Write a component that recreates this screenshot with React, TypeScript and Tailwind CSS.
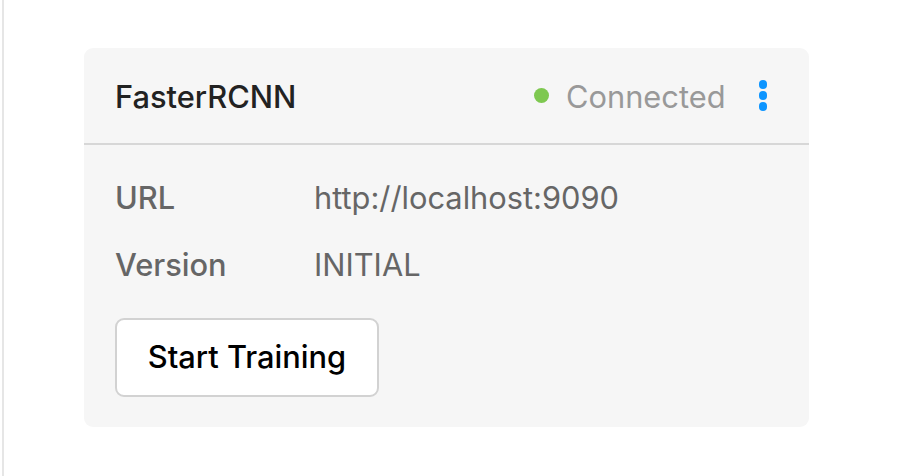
import React from "react";

export default function App() {
  return (
    <div
      className="w-[904px] h-[476px] bg-white flex"
      style={{ fontFamily: "Inter, 'Noto Sans', sans-serif" }}
    >
      <div className="ml-[2px] w-[2px] h-full bg-[#e6e6e6]" />
      <div className="pl-[80px] pt-[48px]">
        <div className="w-[725px] h-[379px] bg-[#f6f6f6] rounded-[9px] flex flex-col">
          <div className="h-[97px] shrink-0 flex items-center justify-between pl-[31px] pr-[42px] border-b-2 border-[#d7d7d7]">
            <div className="mt-[3px] text-[30.8px] font-medium text-[#222222] leading-none">
              FasterRCNN
            </div>
            <div className="flex items-center">
              <span className="w-[15px] h-[15px] rounded-full bg-[#7ec850]" />
              <span className="mt-[3px] ml-[17px] text-[30.8px] text-[#999999] leading-none">
                Connected
              </span>
              <span className="ml-[33px] flex flex-col gap-[2.5px] items-center">
                <span className="w-[8.5px] h-[8.5px] rounded-full bg-[#0d95ff]" />
                <span className="w-[8.5px] h-[8.5px] rounded-full bg-[#0d95ff]" />
                <span className="w-[8.5px] h-[8.5px] rounded-full bg-[#0d95ff]" />
              </span>
            </div>
          </div>
          <div className="flex flex-col pl-[31px] pt-[33px]">
            <div className="flex h-[40px] items-center text-[30.8px] text-[#666666]">
              <span className="w-[199px] font-medium">URL</span>
              <span>http://localhost:9090</span>
            </div>
            <div className="flex h-[40px] mt-[27px] items-center text-[30.8px] text-[#666666]">
              <span className="w-[199px] font-medium">Version</span>
              <span>INITIAL</span>
            </div>
            <button className="mt-[33px] w-[264px] h-[79px] bg-white border-2 border-[#d2d2d2] rounded-[9px] text-[30.8px] font-medium text-black flex items-center justify-center">
              Start Training
            </button>
          </div>
        </div>
      </div>
    </div>
  );
}
